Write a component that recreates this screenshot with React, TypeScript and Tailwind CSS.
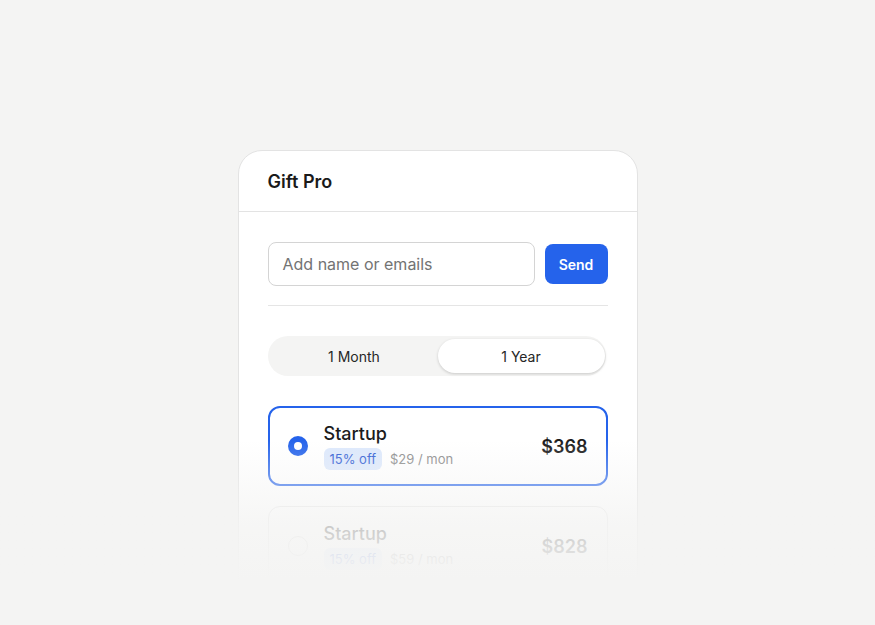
import React from "react";

function Option({
  selected,
  price,
  perMonth,
}: {
  selected: boolean;
  price: string;
  perMonth: string;
}) {
  return (
    <div
      className={
        selected
          ? "flex h-[80px] items-center rounded-[12px] border-2 border-[#2563eb] bg-white px-[18px]"
          : "flex h-[80px] items-center rounded-[12px] border border-[#e5e5e5] bg-white px-[19px]"
      }
    >
      {selected ? (
        <div className="flex h-[20px] w-[20px] items-center justify-center rounded-full bg-[#2563eb]">
          <div className="h-[8px] w-[8px] rounded-full bg-white" />
        </div>
      ) : (
        <div className="h-[20px] w-[20px] rounded-full border border-[#d4d4d4]" />
      )}
      <div className="ml-[16px] flex flex-1 flex-col">
        <div className="text-[18px] leading-[24px] font-medium text-[#1c1c1c]">Startup</div>
        <div className="mt-[2px] flex items-center">
          <span className="rounded-[6px] bg-[#dce8fc] px-[6px] text-[13px] leading-[22px] text-[#2f5bd3]">
            15% off
          </span>
          <span className="ml-[8px] text-[13px] leading-[22px] text-[#8a8a8a]">{perMonth}</span>
        </div>
      </div>
      <div className="text-[18px] font-semibold text-[#1c1c1c]">{price}</div>
    </div>
  );
}

export default function App() {
  return (
    <div
      className="relative flex h-[625px] w-full justify-center overflow-hidden bg-[#f4f4f3] pt-[150px]"
      style={{ fontFamily: "Inter, 'Noto Sans', sans-serif" }}
    >
      <div className="h-fit w-[400px] rounded-[24px] border border-[#e3e3e3] bg-white">
        <div className="flex h-[61px] items-center border-b border-[#e3e3e3] px-[29px]">
          <span className="text-[18px] font-semibold text-[#1a1a1a]">Gift Pro</span>
        </div>
        <div className="px-[29px] pt-[30px] pb-[30px]">
          <div className="flex items-center gap-[10px]">
            <div className="flex h-[44px] flex-1 items-center rounded-[8px] border border-[#d4d4d4] px-[14px]">
              <span className="text-[16px] text-[#737373]">Add name or emails</span>
            </div>
            <button className="h-[40px] w-[63px] rounded-[8px] bg-[#2563eb] text-[14px] font-semibold text-white">
              Send
            </button>
          </div>
          <div className="mt-[19px] h-px bg-[#e5e5e5]" />
          <div className="mt-[30px] mr-[2px] flex h-[40px] rounded-full bg-[#f4f4f3] py-[3px] pr-[1px] pl-[3px]">
            <div className="flex flex-1 items-center justify-center text-[14px] text-[#262626]">1 Month</div>
            <div className="flex flex-1 items-center justify-center rounded-full bg-white text-[14px] text-[#262626] shadow-[0_1px_3px_rgba(0,0,0,0.18)]">
              1 Year
            </div>
          </div>
          <div className="mt-[30px]">
            <Option selected price="$368" perMonth="$29 / mon" />
          </div>
          <div className="mt-[20px]">
            <Option selected={false} price="$828" perMonth="$59 / mon" />
          </div>
        </div>
      </div>
      <div className="pointer-events-none absolute inset-x-0 top-[440px] bottom-0 flex flex-col">
        <div className="h-[140px] bg-gradient-to-b from-[#f4f4f300] via-[#f4f4f3cc] via-60% to-[#f4f4f3]" />
        <div className="flex-1 bg-[#f4f4f3]" />
      </div>
    </div>
  );
}
